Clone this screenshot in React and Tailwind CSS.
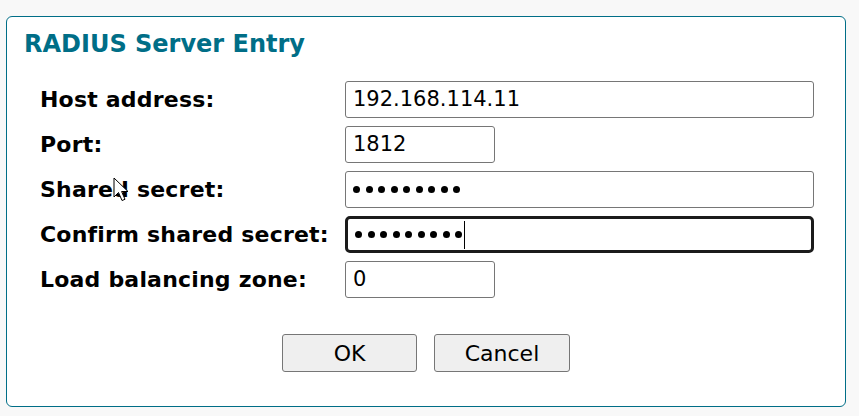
import React from "react";

const font = "font-['DejaVu_Sans','Verdana',sans-serif]";

const Field = ({ width, focused, children }) => (
  <div
    className={`${width} h-[37px] bg-white flex items-center pl-[7px] relative ${
      focused
        ? "border-[3px] border-[#1b1b1b] rounded-[5px] pl-[5px]"
        : "border border-[#767676] rounded-[3px]"
    }`}>
    {children}
  </div>
);

const Dots = ({ count = 9 }) => (
  <div className="flex items-center gap-[5.5px]">
    {Array.from({ length: count }).map((_, i) => (
      <span key={i} className="w-[7px] h-[7px] rounded-full bg-black" />
    ))}
  </div>
);

const rows = [
  { label: "Host address:", width: "w-[469px]", value: "192.168.114.11" },
  { label: "Port:", width: "w-[150px]", value: "1812" },
  { label: "Shared secret:", width: "w-[469px]", secret: true },
  { label: "Confirm shared secret:", width: "w-[469px]", secret: true, focused: true },
  { label: "Load balancing zone:", width: "w-[150px]", value: "0" },
];

export default function App() {
  return (
    <div className={`min-h-screen bg-[#f8f8f8] pt-[16px] pl-[6px] ${font}`}>
      <div className="relative w-[840px] h-[391px] bg-white border border-[#006e87] rounded-[6px]">
        <h2 className="mt-[13px] ml-[17px] text-[24px] leading-[28px] font-bold text-[#006e87]">
          RADIUS Server Entry
        </h2>

        <div className="mt-[23px] ml-[33px] grid grid-cols-[305px_1fr] gap-y-[8px]">
          {rows.map((row) => (
            <React.Fragment key={row.label}>
              <div className="flex items-center text-[22px] font-bold text-black tracking-[0.2px]">
                {row.label}
              </div>
              <Field width={row.width} focused={row.focused}>
                {row.secret ? (
                  <div className="flex items-center">
                    <Dots />
                    {row.focused && (
                      <span className="ml-[2px] w-px h-[28px] bg-black" />
                    )}
                  </div>
                ) : (
                  <span className="text-[21px] text-black">{row.value}</span>
                )}
              </Field>
            </React.Fragment>
          ))}
        </div>

        <div className="mt-[36px] flex justify-center gap-[17px]">
          <button className="w-[135px] h-[38px] bg-[#efefef] border border-[#767676] rounded-[3px] text-[22px] text-black">
            OK
          </button>
          <button className="w-[136px] h-[38px] bg-[#efefef] border border-[#767676] rounded-[3px] text-[22px] text-black">
            Cancel
          </button>
        </div>

        {/* mouse pointer */}
        <svg
          className="absolute left-[106px] top-[160px]"
          width="17"
          height="26"
          viewBox="0 0 17 26">
          <path
            d="M1 1 L1 20 L5.5 15.5 L9 23.5 L12 22.3 L8.6 14.5 L15 14.5 Z"
            fill="#fff"
            stroke="#000"
            strokeWidth="1"
            strokeLinejoin="miter"
          />
        </svg>
      </div>
    </div>
  );
}
